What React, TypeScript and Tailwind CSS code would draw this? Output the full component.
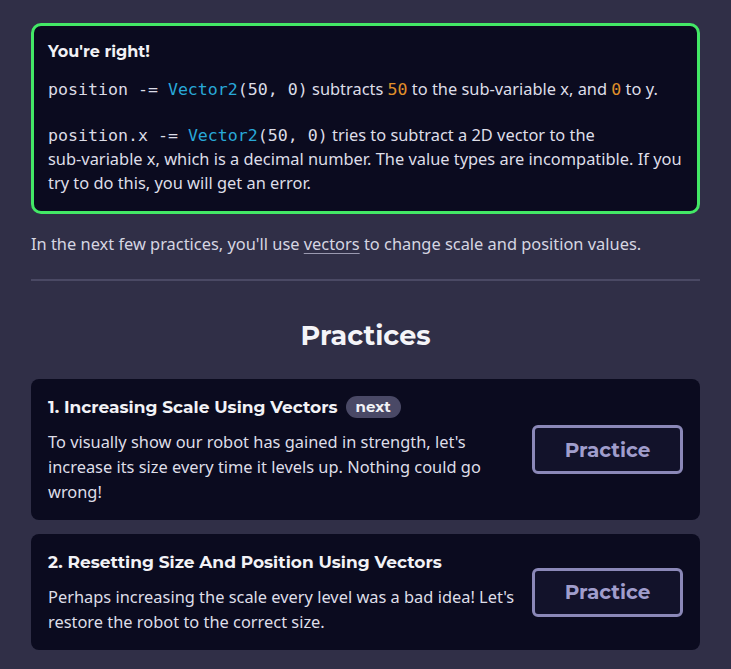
import React from "react";

const heading = { fontFamily: "Montserrat, Inter, 'Noto Sans', sans-serif" };
const body = { fontFamily: "'Noto Sans', 'Open Sans', sans-serif" };
const mono = { fontFamily: "'DejaVu Sans Mono', monospace" };

function Code({ children }: { children: React.ReactNode }) {
  return <code style={mono} className="text-[16.6px] leading-[20px] text-[#dcdce6]">{children}</code>;
}

function PracticeCard({ title, next, desc }: { title: string; next?: boolean; desc: string }) {
  return (
    <div className="bg-[#0b0b1f] rounded-lg px-[17px] pt-[16px] pb-[16px] flex items-center gap-4">
      <div className="flex-1">
        <div className="flex items-center gap-2">
          <h3 style={heading} className="text-[17px] font-bold text-[#f2f2f6] leading-[24px]">{title}</h3>
          {next && (
            <span style={heading} className="bg-[#4a4966] text-[#f2f2f6] text-[15px] font-bold rounded-full px-[10px] leading-[22px]">
              next
            </span>
          )}
        </div>
        <p style={body} className="mt-[10px] text-[16.4px] leading-[25px] text-[#dedee8]">{desc}</p>
      </div>
      <button
        style={heading}
        className="w-[151px] h-[49px] border-[3px] border-[#8b88b8] rounded-md text-[#a09dcc] text-[20px] font-bold bg-[#12122a] shrink-0"
      >
        Practice
      </button>
    </div>
  );
}

export default function App() {
  return (
    <div className="min-h-[669px] bg-[#302f47] px-[31px] pt-[23px] pb-[19px]" style={body}>
      <div className="border-[3px] border-[#43e866] rounded-[10px] bg-[#0b0b1f] px-[14px] pt-[14px] pb-[16px]">
        <h4 style={heading} className="text-[16px] font-bold text-[#f2f2f6] leading-[24px]">You're right!</h4>
        <p className="mt-[13px] text-[16.4px] leading-[24px] text-[#dedee8]">
          <Code>position -= </Code>
          <Code><span className="text-[#28a8d8]">Vector2</span>(50, 0)</Code> subtracts{" "}
          <Code><span className="text-[#e0902a]">50</span></Code> to the{" "}
          <span className="whitespace-nowrap">sub-variable</span> x, and{" "}
          <Code><span className="text-[#e0902a]">0</span></Code> to y.
        </p>
        <p className="mt-[22px] text-[16.4px] leading-[24px] text-[#dedee8]">
          <Code>position.x -= </Code>
          <Code><span className="text-[#28a8d8]">Vector2</span>(50, 0)</Code> tries to subtract a 2D vector to the{" "}
          <span className="whitespace-nowrap">sub-variable</span> x, which is a decimal number. The value types are
          incompatible. If you try to do this, you will get an error.
        </p>
      </div>
      <p className="mt-[17px] text-[16.4px] leading-[25px] text-[#d6d6e2]">
        In the next few practices, you'll use <span className="underline underline-offset-[3px] decoration-[#9a99b0]">vectors</span> to change scale and position values.
      </p>
      <div className="mt-[23px] h-[2px] bg-[#4a4964]" />
      <h2 style={heading} className="mt-[35px] text-center text-[27px] font-bold text-[#f4f4f8] leading-[40px]">
        Practices
      </h2>
      <div className="mt-[23px] flex flex-col gap-[14px]">
        <PracticeCard
          title="1. Increasing Scale Using Vectors"
          next
          desc="To visually show our robot has gained in strength, let's increase its size every time it levels up. Nothing could go wrong!"
        />
        <PracticeCard
          title="2. Resetting Size And Position Using Vectors"
          desc="Perhaps increasing the scale every level was a bad idea! Let's restore the robot to the correct size."
        />
      </div>
    </div>
  );
}
